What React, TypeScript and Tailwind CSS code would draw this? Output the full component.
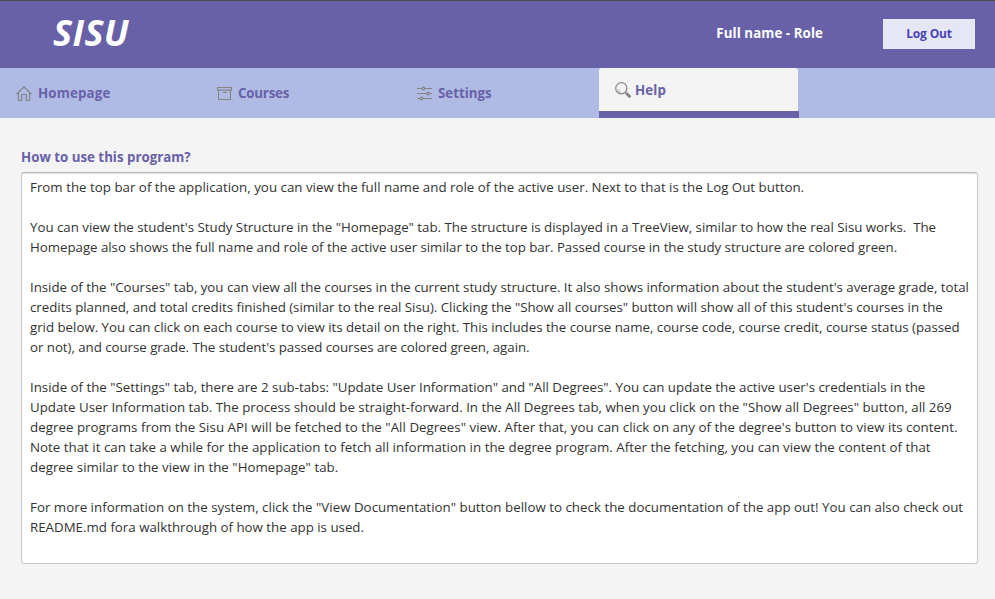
import React from "react";

type Line = { text: string; track: string };

const lines: Line[] = [
  { text: "From the top bar of the application, you can view the full name and role of the active user. Next to that is the Log Out button.", track: "tracking-[0.015px]" },
  { text: "", track: "" },
  { text: "You can view the student's Study Structure in the \"Homepage\" tab. The structure is displayed in a TreeView, similar to how the real Sisu works.  The", track: "tracking-[-0.014px]" },
  { text: "Homepage also shows the full name and role of the active user similar to the top bar. Passed course in the study structure are colored green.", track: "tracking-[-0.034px]" },
  { text: "", track: "" },
  { text: "Inside of the \"Courses\" tab, you can view all the courses in the current study structure. It also shows information about the student's average grade, total", track: "tracking-[-0.032px]" },
  { text: "credits planned, and total credits finished (similar to the real Sisu). Clicking the \"Show all courses\" button will show all of this student's courses in the", track: "tracking-[-0.018px]" },
  { text: "grid below. You can click on each course to view its detail on the right. This includes the course name, course code, course credit, course status (passed", track: "tracking-[-0.02px]" },
  { text: "or not), and course grade. The student's passed courses are colored green, again.", track: "tracking-[-0.04px]" },
  { text: "", track: "" },
  { text: "Inside of the \"Settings\" tab, there are 2 sub-tabs: \"Update User Information\" and \"All Degrees\". You can update the active user's credentials in the", track: "tracking-[-0.008px]" },
  { text: "Update User Information tab. The process should be straight-forward. In the All Degrees tab, when you click on the \"Show all Degrees\" button, all 269", track: "" },
  { text: "degree programs from the Sisu API will be fetched to the \"All Degrees\" view. After that, you can click on any of the degree's button to view its content.", track: "tracking-[0.038px]" },
  { text: "Note that it can take a while for the application to fetch all information in the degree program. After the fetching, you can view the content of that", track: "tracking-[0.018px]" },
  { text: "degree similar to the view in the \"Homepage\" tab.", track: "tracking-[0.02px]" },
  { text: "", track: "" },
  { text: "For more information on the system, click the \"View Documentation\" button bellow to check the documentation of the app out! You can also check out", track: "tracking-[0.02px]" },
  { text: "README.md fora walkthrough of how the app is used.", track: "" },
];

const svgProps = {
  width: 16,
  height: 16,
  viewBox: "0 0 16 16",
  fill: "none",
  stroke: "#858585",
  className: "shrink-0",
};

const HomeIcon = () => (
  <svg {...svgProps}>
    <path strokeWidth="1.2" d="M.5 8.3 8 .9l7.5 7.4M2.5 7v7.5h3.2V8.5h4.6v6h3.2V7" />
  </svg>
);

const CoursesIcon = () => (
  <svg {...svgProps}>
    <path strokeWidth="1.1" d="M1.5 1.5h14v2.6h-14zM2.5 4v9.5h12V4M6.5 6.5h4.5" />
  </svg>
);

const SettingsIcon = () => (
  <svg {...svgProps}>
    <path strokeWidth="1.2" d="M1 2.5h5.2m2.6 0H16M1 7.5h9.7m2.6 0H16M1 12.5h3.2m2.6 0H16" />
    <circle cx="7.5" cy="2.5" r="1.3" strokeWidth="1.2" />
    <circle cx="12" cy="7.5" r="1.3" strokeWidth="1.2" />
    <circle cx="5.5" cy="12.5" r="1.3" strokeWidth="1.2" />
  </svg>
);

const HelpIcon = () => (
  <svg {...svgProps}>
    <circle cx="6.3" cy="6.3" r="5.6" strokeWidth="1.2" />
    <path d="M3 7.2c.4 1.4 1.3 2.3 2.7 2.7" strokeWidth=".8" />
    <path d="m10.3 10.3 1.2 1.2" />
    <path d="m11 11 4.4 4.2" strokeWidth="3" />
  </svg>
);

const tabs = [
  { label: "Homepage", Icon: HomeIcon, track: "tracking-[0.17px]" },
  { label: "Courses", Icon: CoursesIcon, track: "tracking-[-0.2px]" },
  { label: "Settings", Icon: SettingsIcon, track: "" },
];

export default function App() {
  return (
    <div className="flex h-screen w-full flex-col overflow-hidden bg-[#f4f4f4] font-['Open_Sans','Noto_Sans',sans-serif] text-[13.3px] text-[#333]">
      <header className="flex h-[68px] shrink-0 items-center border-t border-[#4d4d4d] bg-[#6861a8] pr-5 pb-[2px] pl-[53px] font-bold text-white">
        <h1 className="pb-[2px] text-[36px] leading-[60px] tracking-[0.4px] italic">SISU</h1>
        <span className="mr-[60px] ml-auto tracking-[0.08px]">Full name - Role</span>
        <button className="h-[30px] w-[92px] bg-[#e6e6f5] text-[12px] font-bold tracking-[-0.15px] text-[#4744b8]">Log Out</button>
      </header>
      <nav className="flex h-[50px] shrink-0 bg-[#afbbe4] font-bold text-[#6861a8]">
        {tabs.map(({ label, Icon, track }) => (
          <div key={label} className="flex w-[200px] items-center gap-[6px] pt-px pl-4">
            <Icon />
            <span className={track}>{label}</span>
          </div>
        ))}
        <div className="-ml-px flex w-[200px] flex-col">
          <div className="mr-px flex h-[43px] items-center gap-1 rounded-t-[3px] bg-[#f4f4f4] pt-px pl-4">
            <HelpIcon />
            <span className="pt-[2px] tracking-[0.1px]">Help</span>
          </div>
          <div className="h-[7px] bg-[#6861a8]" />
        </div>
      </nav>
      <main className="px-[21px] pt-[29px]">
        <h2 className="h-[25px] leading-5 font-bold text-[#6861a8]">How to use this program?</h2>
        <div className="h-[392px] w-[957px] rounded-[3px] border border-[#c8c8c8] border-t-[#b5b5b5] bg-white pt-1 pl-2 shadow-[inset_0_2px_2px_-1px_#ddd]">
          {lines.map((l, i) => (
            <p key={i} className="h-5 leading-5 whitespace-pre">
              <span className={l.track}>{l.text}</span>
            </p>
          ))}
        </div>
      </main>
    </div>
  );
}
